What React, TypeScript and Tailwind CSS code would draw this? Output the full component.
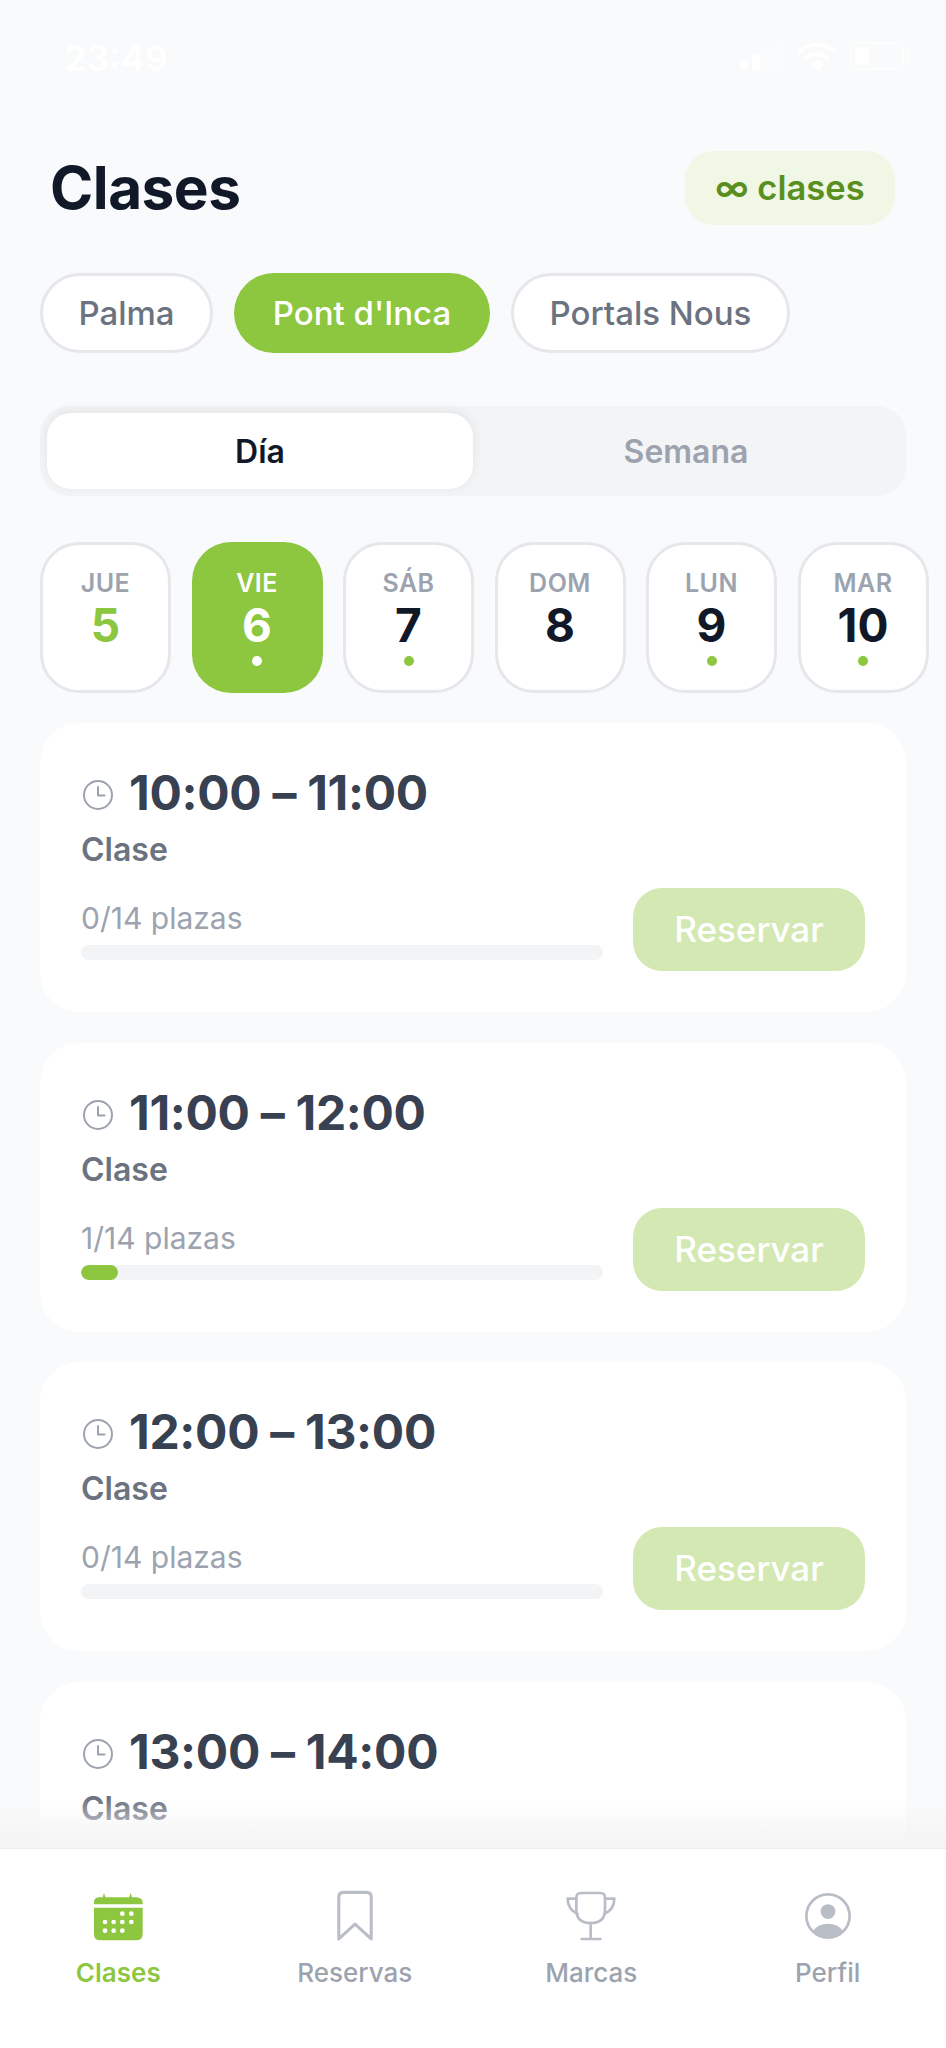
import React from 'react';

const days = [
  { label: 'JUE', num: '5', dot: false, state: 'today' },
  { label: 'VIE', num: '6', dot: true, state: 'active' },
  { label: 'SÁB', num: '7', dot: true, state: '' },
  { label: 'DOM', num: '8', dot: false, state: '' },
  { label: 'LUN', num: '9', dot: true, state: '' },
  { label: 'MAR', num: '10', dot: true, state: '' },
];

const classes = [
  { time: '10:00 – 11:00', booked: 0 },
  { time: '11:00 – 12:00', booked: 1 },
  { time: '12:00 – 13:00', booked: 0 },
  { time: '13:00 – 14:00', booked: 0 },
];

const ClockIcon = () => (
  <svg width="32" height="32" viewBox="0 0 32 32" fill="none" stroke="#9ca3af" strokeWidth="2" strokeLinecap="round" strokeLinejoin="round" className="ml-[1px] mr-[-1px] mt-[4px] shrink-0">
    <circle cx="16" cy="16" r="14" />
    <path d="M16 8v8.5h6.5" />
  </svg>
);

const CalendarIcon = () => (
  <svg width="50" height="50" viewBox="100 95 150 150">
    <path fill="#8dc63f" d="M103 135v-6q0-14 14-15h12l4-14 4 14h72l4-14 4 14h12q20 1 20 15v6z" />
    <path fill="#8dc63f" d="M103 145h146v78q0 20-20 20H123q-20 0-20-20z" />
    <g fill="#fff">
      {[[188, 163], [215, 163], [136, 188], [162, 188], [188, 188], [215, 188], [136, 214], [162, 214], [188, 214]].map(([x, y]) => (
        <circle key={`${x}-${y}`} cx={x} cy={y} r="7" />
      ))}
    </g>
  </svg>
);

const BookmarkIcon = () => (
  <svg width="44" height="54" viewBox="820 92 130 160" fill="none" stroke="#b9bdc6" strokeWidth="9" strokeLinejoin="round">
    <path d="M837 240V116q0-14 14-14h68q14 0 14 14v124l-48-44z" />
  </svg>
);

const TrophyIcon = () => (
  <svg width="50" height="50" viewBox="81 94 150 150" fill="none" stroke="#b9bdc6" strokeWidth="8" strokeLinecap="round" strokeLinejoin="round">
    <path d="M112 114q0-14 14-14h58q14 0 14 14v36q0 40-43 40t-43-40z" />
    <path d="M112 117H86q0 32 30 46" />
    <path d="M198 117h28q0 32-30 46" />
    <path d="M155 190v48M128 238h56" />
  </svg>
);

const ProfileIcon = () => (
  <svg width="46" height="46" viewBox="796 102 136 136">
    <circle cx="864" cy="170" r="64" fill="none" stroke="#b9bdc6" strokeWidth="8" />
    <circle cx="864" cy="157" r="22" fill="#b9bdc6" />
    <path fill="#b9bdc6" d="M820 214q16-21 44-21t44 21a64 64 0 0 1-88 0z" />
  </svg>
);

const navItems = [
  { label: 'Clases', icon: <CalendarIcon />, active: true },
  { label: 'Reservas', icon: <BookmarkIcon />, active: false },
  { label: 'Marcas', icon: <TrophyIcon />, active: false },
  { label: 'Perfil', icon: <ProfileIcon />, active: false },
];

const StatusBar = () => (
  <div className="flex h-[114px] shrink-0 items-start justify-between pl-[64px] pr-[37px] pt-[36px] text-white">
    <span className="text-[36px] font-semibold leading-[44px]">23:49</span>
    <div className="flex items-center gap-[14px] pt-[6px]">
      <svg width="44" height="28" viewBox="0 0 44 28" fill="#fff">
        <rect x="0" y="18" width="8" height="10" rx="2" />
        <rect x="12" y="12" width="8" height="16" rx="2" />
        <rect x="24" y="6" width="8" height="22" rx="2" opacity="0.25" />
        <rect x="36" y="0" width="8" height="28" rx="2" opacity="0.25" />
      </svg>
      <svg width="38" height="28" viewBox="0 0 38 28" fill="none" stroke="#fff" strokeWidth="4" strokeLinecap="round">
        <path d="M2 9q17-13 34 0M8 16q11-8 22 0" />
        <circle cx="19" cy="23" r="3" fill="#fff" />
      </svg>
      <div className="flex items-center">
        <div className="h-[28px] w-[54px] rounded-[8px] border-2 border-white/50 p-[3px]">
          <div className="h-full w-[14px] rounded-[4px] bg-white" />
        </div>
        <div className="ml-[2px] h-[10px] w-[3px] rounded-r bg-white/50" />
      </div>
    </div>
  </div>
);

export default function App() {
  return (
    <div className="relative flex h-[2048px] w-[946px] flex-col overflow-hidden bg-[#f9fafb] font-['Inter',sans-serif]">
      <StatusBar />

      <div className="min-h-0 flex-1 overflow-hidden">
        {/* cabecera */}
        <div className="mt-[37px] flex h-[74px] items-center justify-between pl-[50px] pr-[51px]">
          <h1 className="text-[58.5px] font-bold leading-none tracking-[-0.5px] text-[#111827]">Clases</h1>
          <div className="flex h-[74px] w-[210px] items-center justify-center rounded-[29px] bg-[#f0f7e4] text-[34.5px] font-semibold text-[#5a8f1f]">
            ∞ clases
          </div>
        </div>

        {/* centros */}
        <div className="mt-[48px] flex gap-[21px] pl-[40px]">
          <button className="flex h-[80px] w-[173px] items-center justify-center rounded-[40px] border-[3px] border-[#e5e7eb] bg-white pt-[2px] text-[33px] font-medium text-[#6b7280]">
            Palma
          </button>
          <button className="flex h-[80px] w-[256px] items-center justify-center rounded-[40px] bg-[#8dc63f] pt-[2px] text-[33px] font-medium text-white">
            Pont d'Inca
          </button>
          <button className="flex h-[80px] w-[279px] items-center justify-center rounded-[40px] border-[3px] border-[#e5e7eb] bg-white pt-[2px] text-[33px] font-medium text-[#6b7280]">
            Portals Nous
          </button>
        </div>

        {/* selector día / semana */}
        <div className="mx-[40px] mt-[53px] flex h-[90px] rounded-[29px] bg-[#f3f4f6] p-[7px]">
          <div className="flex flex-1 items-center justify-center rounded-[24px] bg-white pt-[2px] text-[32px] font-semibold text-[#111827] shadow-[0_-2px_12px_rgba(0,0,0,0.07)]">
            Día
          </div>
          <div className="flex flex-1 items-center justify-center pt-[2px] text-[32px] font-semibold text-[#9ca3af]">
            Semana
          </div>
        </div>

        {/* días */}
        <div className="mt-[46px] flex w-[1000px] gap-[20.5px] pl-[40px]">
          {days.map((d) => (
            <div
              key={d.label}
              className={
                d.state === 'active'
                  ? 'flex h-[151px] w-[131px] shrink-0 flex-col items-center rounded-[39px] bg-[#8dc63f] pt-[26px]'
                  : 'flex h-[151px] w-[131px] shrink-0 flex-col items-center rounded-[39px] border-[3px] border-[#e5e7eb] bg-white pt-[23px]'
              }
            >
              <span className={d.state === 'active' ? 'text-[25px] font-semibold leading-[30px] tracking-[0.5px] text-white' : 'text-[25px] font-semibold leading-[30px] tracking-[0.5px] text-[#9ca3af]'}>
                {d.label}
              </span>
              <span
                className={
                  d.state === 'active'
                    ? 'mt-[1px] text-[46px] font-bold leading-[52px] text-white'
                    : d.state === 'today'
                      ? 'mt-[1px] text-[46px] font-bold leading-[52px] text-[#8dc63f]'
                      : 'mt-[1px] text-[46px] font-bold leading-[52px] text-[#111827]'
                }
              >
                {d.num}
              </span>
              {d.dot && <span className={d.state === 'active' ? 'mt-[5px] h-[10px] w-[10px] rounded-full bg-white' : 'mt-[5px] h-[10px] w-[10px] rounded-full bg-[#8dc63f]'} />}
            </div>
          ))}
        </div>

        {/* clases */}
        <div className="mt-[30px] ml-[40px] flex w-[866px] flex-col gap-[30.6px]">
          {classes.map((c) => (
            <div key={c.time} className="h-[289px] shrink-0 rounded-[39px] bg-white pl-[41px] pr-[41px] pt-[41px]">
              <div className="flex h-[58px] items-center gap-[16px]">
                <ClockIcon />
                <span className="text-[48px] font-bold leading-none tracking-[-0.3px] text-[#374151]">{c.time}</span>
              </div>
              <div className="mt-[8px] text-[32px] font-semibold leading-[40px] text-[#6b7280]">Clase</div>
              <div className="mt-[18px] flex items-start justify-between">
                <div className="w-[522px] pt-[10px]">
                  <div className="text-[30px] leading-[40px] text-[#9ca3af]">{c.booked}/14 plazas</div>
                  <div className="mt-[7px] h-[15px] overflow-hidden rounded-[8px] bg-[#f3f4f6]">
                    <div className="h-full rounded-[8px] bg-[#8dc63f]" style={{ width: `${(c.booked / 14) * 100}%` }} />
                  </div>
                </div>
                <button className="flex h-[83px] w-[232px] items-center justify-center rounded-[29px] bg-[#d3e8b2] text-[35px] font-medium text-white">
                  Reservar
                </button>
              </div>
            </div>
          ))}
        </div>
      </div>

      {/* degradado sobre la barra inferior */}
      <div className="pointer-events-none absolute bottom-[200px] left-0 h-[50px] w-full bg-gradient-to-b from-transparent to-[#f4f4f5]" />

      <nav className="grid h-[200px] shrink-0 grid-cols-4 border-t border-[#eeeeee] bg-white pt-[40px]">
        {navItems.map((item) => (
          <div key={item.label} className="flex flex-col items-center">
            <div className="flex h-[54px] items-center justify-center">{item.icon}</div>
            <span className={item.active ? 'mt-[14px] text-[26px] font-semibold leading-[32px] text-[#8dc63f]' : 'mt-[14px] text-[26px] font-medium leading-[32px] text-[#9ca3af]'}>
              {item.label}
            </span>
          </div>
        ))}
      </nav>
    </div>
  );
}
